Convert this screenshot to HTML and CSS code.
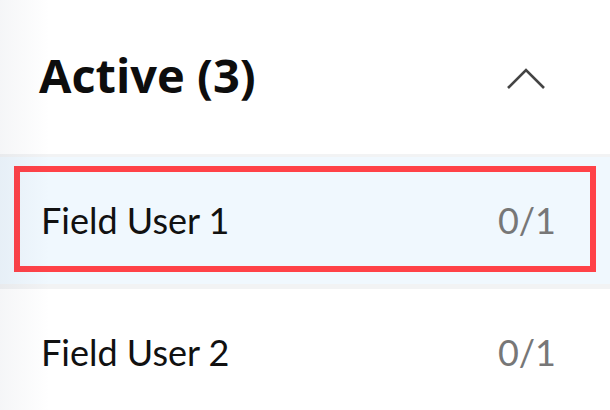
FILE: index.html
```html
<!DOCTYPE html>
<html>
<head>
<meta charset="utf-8">
<link rel="stylesheet" href="styles.css">
</head>
<body>
<div class="panel">
  <div class="header">
    <h2 class="title">Active (3)</h2>
    <svg class="chevron" width="38" height="21" viewBox="0 0 38 21"><polyline points="1,20 19,2 37,20" fill="none" stroke="#444" stroke-width="2.6"/></svg>
  </div>
  <div class="row selected">
    <div class="item">
      <span class="name">Field User 1</span>
      <span class="count">0/1</span>
    </div>
  </div>
  <div class="row">
    <div class="item plain">
      <span class="name">Field User 2</span>
      <span class="count">0/1</span>
    </div>
  </div>
</div>
</body>
</html>
```
FILE: styles.css
```css
html, body {
  margin: 0;
  padding: 0;
  background: #ffffff;
}
body {
  width: 610px;
  height: 410px;
  overflow: hidden;
  font-family: Lato, "Open Sans", sans-serif;
  color: #111;
}
.panel {
  position: relative;
}
.panel::before {
  content: "";
  position: absolute;
  left: 0;
  top: 0;
  bottom: 0;
  width: 50px;
  background: linear-gradient(to right, rgba(20, 40, 80, 0.045), rgba(20, 40, 80, 0));
  pointer-events: none;
  z-index: 2;
}
.header {
  height: 154px;
  display: flex;
  align-items: center;
  justify-content: space-between;
  padding: 0 65px 0 39px;
  box-sizing: border-box;
}
.title {
  margin: 0;
  font-family: "Open Sans", Lato, sans-serif;
  font-size: 47px;
  font-weight: 700;
  color: #0d0d0d;
  line-height: 1;
  margin-top: -4px;
}
.chevron {
  display: block;
  margin-top: 2px;
}
.row {
  height: 130px;
  border-top: 3px solid #f2f3f4;
  box-sizing: border-box;
  display: flex;
  align-items: stretch;
}
.row.selected {
  background: #f0f8fe;
  border-bottom: 2px solid #f2f3f4;
  height: 132px;
  padding: 9px 14px 12px;
}
.item {
  flex: 1;
  display: flex;
  align-items: center;
  justify-content: space-between;
  border: 6px solid #ff4248;
  padding: 2px 34px 0 21px;
}
.item.plain {
  border: none;
  padding: 0 54px 0 41px;
  height: 125px;
}
.name {
  font-size: 36px;
  color: #111;
}
.count {
  font-size: 36px;
  color: #777;
}
```
